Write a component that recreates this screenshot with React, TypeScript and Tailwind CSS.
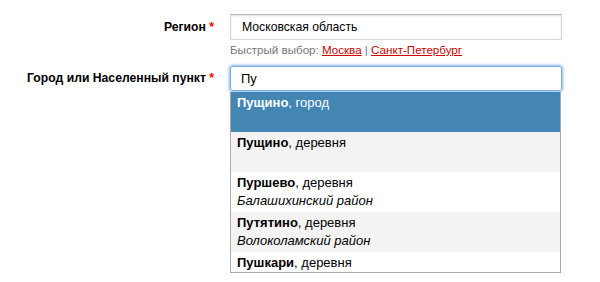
import React from "react";

type Item = { name: string; kind: string; area?: string };

const items: Item[] = [
  { name: "Пущино", kind: "город" },
  { name: "Пущино", kind: "деревня" },
  { name: "Пуршево", kind: "деревня", area: "Балашихинский район" },
  { name: "Путятино", kind: "деревня", area: "Волоколамский район" },
  { name: "Пушкари", kind: "деревня" },
];

function Label({ children }: { children: React.ReactNode }) {
  return (
    <div className="w-[214px] shrink-0 text-right text-[12.2px] font-bold text-black">
      {children} <span className="text-[#e00]">*</span>
    </div>
  );
}

export default function App() {
  return (
    <div
      className="w-[600px] h-[282px] bg-white overflow-hidden pt-[14px]"
      style={{ fontFamily: '"Liberation Sans", Arial, sans-serif' }}
    >
      {/* Регион */}
      <div className="flex items-start">
        <div className="h-[26px] flex items-center">
          <Label>Регион</Label>
        </div>
        <div className="ml-[16px] w-[332px]">
          <div className="h-[26px] border border-[#d6d6d6] border-t-[#b5b5b5] shadow-[inset_0_1px_2px_rgba(0,0,0,0.12)] flex items-center px-[11px] text-[12.2px] text-black">
            Московская область
          </div>
          <div className="mt-[2px] text-[11.6px] text-[#777] leading-[15px]">
            Быстрый выбор:{" "}
            <a className="text-[#c00] underline" href="#">
              Москва
            </a>{" "}
            |{" "}
            <a className="text-[#c00] underline" href="#">
              Санкт-Петербург
            </a>
          </div>
        </div>
      </div>

      {/* Город */}
      <div className="flex items-start mt-[9px]">
        <div className="h-[25px] flex items-center">
          <Label>Город или Населенный пункт</Label>
        </div>
        <div className="ml-[16px] w-[332px]">
          <div className="h-[25px] border border-[#7aaee0] rounded-[3px] shadow-[0_0_3px_1px_rgba(90,150,220,0.7)] flex items-center px-[10px] text-[13px] text-black">
            Пу
          </div>
          <div className="mt-[1px] w-[331px] border border-t-0 border-[#aaa] text-[13px] leading-[17px]">
            {items.map((it, i) => (
              <div
                key={i}
                className={
                  "px-[6px] pt-[2px] " +
                  (i === items.length - 1 ? "h-[20px] " : "h-[40px] ") +
                  (i === 0
                    ? "bg-[#4386b4] text-white"
                    : i % 2 === 1
                    ? "bg-[#f3f3f3] text-black"
                    : "bg-white text-black")
                }
              >
                <div>
                  <b>{it.name}</b>, {it.kind}
                </div>
                {it.area && <div className="italic mt-[1px]">{it.area}</div>}
              </div>
            ))}
          </div>
        </div>
      </div>
    </div>
  );
}
